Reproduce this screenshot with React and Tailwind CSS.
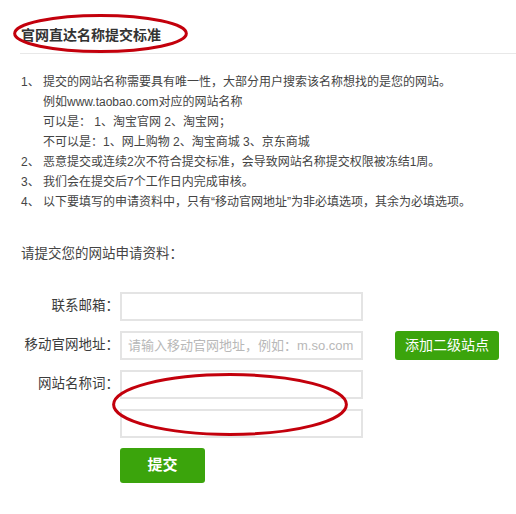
import React from "react";

const font = { fontFamily: '"Liberation Sans", "Noto Sans CJK SC", sans-serif' };

const rules = [
  { no: "1、", lines: ["提交的网站名称需要具有唯一性，大部分用户搜索该名称想找的是您的网站。", "例如www.taobao.com对应的网站名称", "可以是： 1、淘宝官网 2、淘宝网；", "不可以是：1、网上购物 2、淘宝商城 3、京东商城"] },
  { no: "2、", lines: ["恶意提交或连续2次不符合提交标准，会导致网站名称提交权限被冻结1周。"] },
  { no: "3、", lines: ["我们会在提交后7个工作日内完成审核。"] },
  { no: "4、", lines: ["以下要填写的申请资料中，只有“移动官网地址”为非必填选项，其余为必填选项。"] },
];

function Ring({ className }) {
  return (
    <svg className={`absolute pointer-events-none ${className}`} viewBox="0 0 100 100" preserveAspectRatio="none">
      <ellipse cx="50" cy="50" rx="48.5" ry="46" fill="none" stroke="#c3000c" strokeWidth="3" vectorEffect="non-scaling-stroke" />
    </svg>
  );
}

function Field({ label, placeholder, children }) {
  return (
    <div className="flex items-center h-[29px]">
      <div className="w-[100px] pr-[1px] text-right text-[13.5px] text-[#3c3c3c]">{label}</div>
      <input
        placeholder={placeholder}
        className="w-[243px] h-[29px] border-2 border-[#e4e4e4] px-[6px] text-[13px] outline-none placeholder:text-[#b8b8b8]"
        style={font}
      />
      {children}
    </div>
  );
}

export default function App() {
  return (
    <div className="relative w-[516px] h-[514px] bg-white pl-[20px] text-[#444]" style={font}>
      <Ring className="left-[12px] top-[14px] w-[177px] h-[39px]" />
      <Ring className="left-[110px] top-[372px] w-[240px] h-[65px]" />

      <div className="pt-[25px] pb-[8px] border-b border-[#e8e8e8]">
        <h2 className="h-[20px] leading-[20px] text-[14px] font-bold text-[#333] pl-[1px]">官网直达名称提交标准</h2>
      </div>

      <div className="mt-[18px] text-[12px] leading-[20px]">
        {rules.map((r) => (
          <div key={r.no} className="flex">
            <span className="w-[23px] pl-[1px] shrink-0">{r.no}</span>
            <div>
              {r.lines.map((l) => (
                <div key={l} className="whitespace-nowrap">{l}</div>
              ))}
            </div>
          </div>
        ))}
      </div>

      <div className="mt-[32px] text-[13.5px] leading-[20px] pl-[1px]">请提交您的网站申请资料：</div>

      <div className="mt-[28px] flex flex-col gap-[10px]">
        <Field label="联系邮箱：" />
        <Field label="移动官网地址：" placeholder="请输入移动官网地址，例如：m.so.com">
          <button className="ml-[32px] w-[104px] h-[29px] rounded-[3px] bg-[#3ba40c] text-white text-[14px]">添加二级站点</button>
        </Field>
        <Field label="网站名称词：" />
        <Field label="" />
        <div className="pl-[100px]">
          <button className="w-[85px] h-[35px] rounded-[3px] bg-[#3ba40c] text-white text-[15px] font-bold">提交</button>
        </div>
      </div>
    </div>
  );
}
